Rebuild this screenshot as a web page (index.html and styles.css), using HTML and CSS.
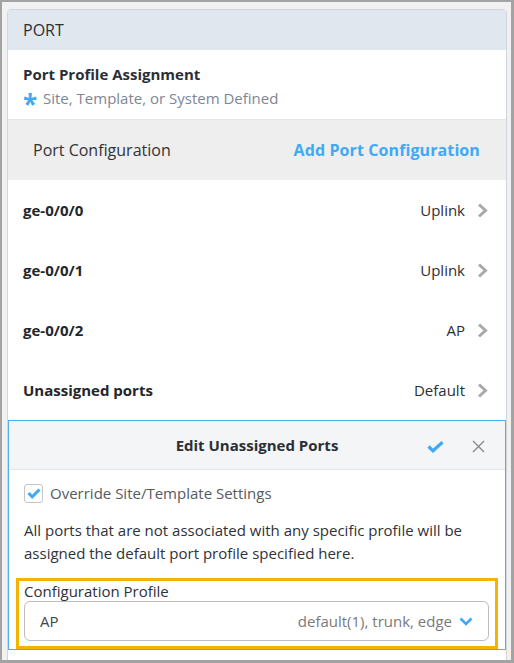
FILE: index.html
```html
<!DOCTYPE html>
<html>
<head>
<meta charset="utf-8">
<link rel="stylesheet" href="styles.css">
</head>
<body>
<div class="frame">
  <div class="card">
    <div class="card-header">PORT</div>
    <div class="assign">
      <div class="assign-title">Port Profile Assignment</div>
      <div class="assign-sub"><span class="star">*</span>Site, Template, or System Defined</div>
    </div>
    <div class="config-bar">
      <span class="config-label">Port Configuration</span>
      <span class="config-add">Add Port Configuration</span>
    </div>
    <div class="row">
      <span class="row-name">ge-0/0/0</span>
      <span class="row-value">Uplink<svg class="chev" width="11" height="15" viewBox="0 0 11 15"><polyline points="2,1.5 8.5,7.5 2,13.5" fill="none" stroke="#a9a9a9" stroke-width="3"/></svg></span>
    </div>
    <div class="row">
      <span class="row-name">ge-0/0/1</span>
      <span class="row-value">Uplink<svg class="chev" width="11" height="15" viewBox="0 0 11 15"><polyline points="2,1.5 8.5,7.5 2,13.5" fill="none" stroke="#a9a9a9" stroke-width="3"/></svg></span>
    </div>
    <div class="row">
      <span class="row-name">ge-0/0/2</span>
      <span class="row-value">AP<svg class="chev" width="11" height="15" viewBox="0 0 11 15"><polyline points="2,1.5 8.5,7.5 2,13.5" fill="none" stroke="#a9a9a9" stroke-width="3"/></svg></span>
    </div>
    <div class="row">
      <span class="row-name">Unassigned ports</span>
      <span class="row-value">Default<svg class="chev" width="11" height="15" viewBox="0 0 11 15"><polyline points="2,1.5 8.5,7.5 2,13.5" fill="none" stroke="#a9a9a9" stroke-width="3"/></svg></span>
    </div>
    <div class="edit">
      <div class="edit-header">
        <span class="edit-title">Edit Unassigned Ports</span>
        <svg class="edit-ok" width="17" height="12" viewBox="0 0 17 12"><polyline points="1.5,5.5 6,9.8 15.5,1.2" fill="none" stroke="#3fa9f5" stroke-width="3.2"/></svg>
        <svg class="edit-close" width="13" height="13" viewBox="0 0 13 13"><path d="M1 1 L12 12 M12 1 L1 12" stroke="#8a8a8a" stroke-width="1.4" fill="none"/></svg>
      </div>
      <div class="edit-body">
        <label class="check-row">
          <span class="checkbox"><svg width="14" height="11" viewBox="0 0 14 11"><polyline points="1.5,5 5.2,8.8 12.5,1.5" fill="none" stroke="#3fa9f5" stroke-width="3"/></svg></span>
          <span class="check-label">Override Site/Template Settings</span>
        </label>
        <p class="desc">All ports that are not associated with any specific profile will be assigned the default port profile specified here.</p>
        <div class="highlight">
          <div class="field-label">Configuration Profile</div>
          <div class="select">
            <span class="select-value">AP</span>
            <span class="select-right">default(1), trunk, edge<svg class="select-chev" width="14" height="9" viewBox="0 0 14 9"><polyline points="1.5,1.5 7,7 12.5,1.5" fill="none" stroke="#3fa9f5" stroke-width="2.6"/></svg></span>
          </div>
        </div>
      </div>
    </div>
  </div>
</div>
</body>
</html>
```
FILE: styles.css
```css
* { box-sizing: border-box; }
html, body { margin: 0; padding: 0; }
body {
  font-family: "Open Sans", "Noto Sans", sans-serif;
  color: #2f3237;
  background: #f1f1f1;
}
.frame {
  width: 514px;
  height: 663px;
  border-style: solid;
  border-color: #a3a3a3;
  border-width: 2px 3px 3px 2px;
  background: #f1f1f1;
  padding: 7px 4px 0 5px;
  overflow: hidden;
}
.card {
  background: #fff;
  border: 1px solid #cfd6e0;
  border-radius: 4px;
  height: 700px;
  overflow: hidden;
}
.card-header {
  height: 40px;
  background: #e1e7ef;
  font-size: 16px;
  line-height: 40px;
  padding-left: 15px;
  color: #2b2f35;
}
.assign {
  padding: 14px 15px 11px;
  border-bottom: 1px solid #e2e5ea;
}
.assign-title {
  font-weight: 700;
  font-size: 15px;
  line-height: 20px;
  color: #2b2f35;
}
.assign-sub {
  margin-top: 4px;
  font-size: 15px;
  line-height: 20px;
  color: #7d8696;
  display: flex;
  align-items: center;
}
.star {
  color: #3fa9f5;
  font-weight: 700;
  font-size: 26px;
  line-height: 20px;
  width: 20px;
  height: 20px;
  padding-top: 6px;
}
.config-bar {
  height: 60px;
  background: #eeeeee;
  display: flex;
  align-items: center;
  justify-content: space-between;
  padding: 0 26px 0 25px;
  font-size: 16px;
}
.config-label { color: #333; }
.config-add { color: #3fa9f5; font-weight: 700; letter-spacing: 0.1px; }
.row {
  height: 60px;
  display: flex;
  align-items: center;
  justify-content: space-between;
  padding: 0 18px 0 15px;
  font-size: 15px;
}
.row-name { font-weight: 700; color: #23262b; }
.row-value {
  display: flex;
  align-items: center;
  color: #2b2f35;
}
.chev { margin-left: 12px; }
.edit {
  border: 1px solid #4fb0f0;
}
.edit-header {
  height: 49px;
  background: #f4f5f7;
  border-bottom: 1px solid #e6e8eb;
  display: flex;
  align-items: center;
  justify-content: center;
  position: relative;
}
.edit-title {
  font-size: 15px;
  font-weight: 700;
  color: #2b2f35;
}
.edit-ok {
  position: absolute;
  left: 418px;
  top: 20px;
}
.edit-close {
  position: absolute;
  left: 463px;
  top: 19px;
}
.edit-body {
  padding: 13px 7px 0 7px;
}
.check-row {
  display: flex;
  align-items: center;
  padding-left: 8px;
  height: 20px;
}
.checkbox {
  width: 19px;
  height: 19px;
  border: 1px solid #c4c4c4;
  border-radius: 3px;
  display: flex;
  align-items: center;
  justify-content: center;
  background: #fff;
}
.check-label {
  margin-left: 7px;
  font-size: 15px;
  color: #555a61;
}
.desc {
  margin: 16px 0 0;
  padding-left: 8px;
  font-size: 15px;
  line-height: 23px;
  color: #2f3237;
}
.highlight {
  margin-top: 13px;
  border: 3px solid #f5b301;
  padding: 1px 6px 5px 5px;
}
.field-label {
  font-size: 15px;
  line-height: 19px;
  color: #2f3237;
}
.select {
  height: 40px;
  border: 1px solid #bdbdbd;
  border-radius: 6px;
  display: flex;
  align-items: center;
  justify-content: space-between;
  padding: 0 15px 0 15px;
  font-size: 15px;
}
.select-value { color: #444; }
.select-right {
  display: flex;
  align-items: center;
  color: #7a7a7a;
}
.select-chev { margin-left: 7px; }
```
